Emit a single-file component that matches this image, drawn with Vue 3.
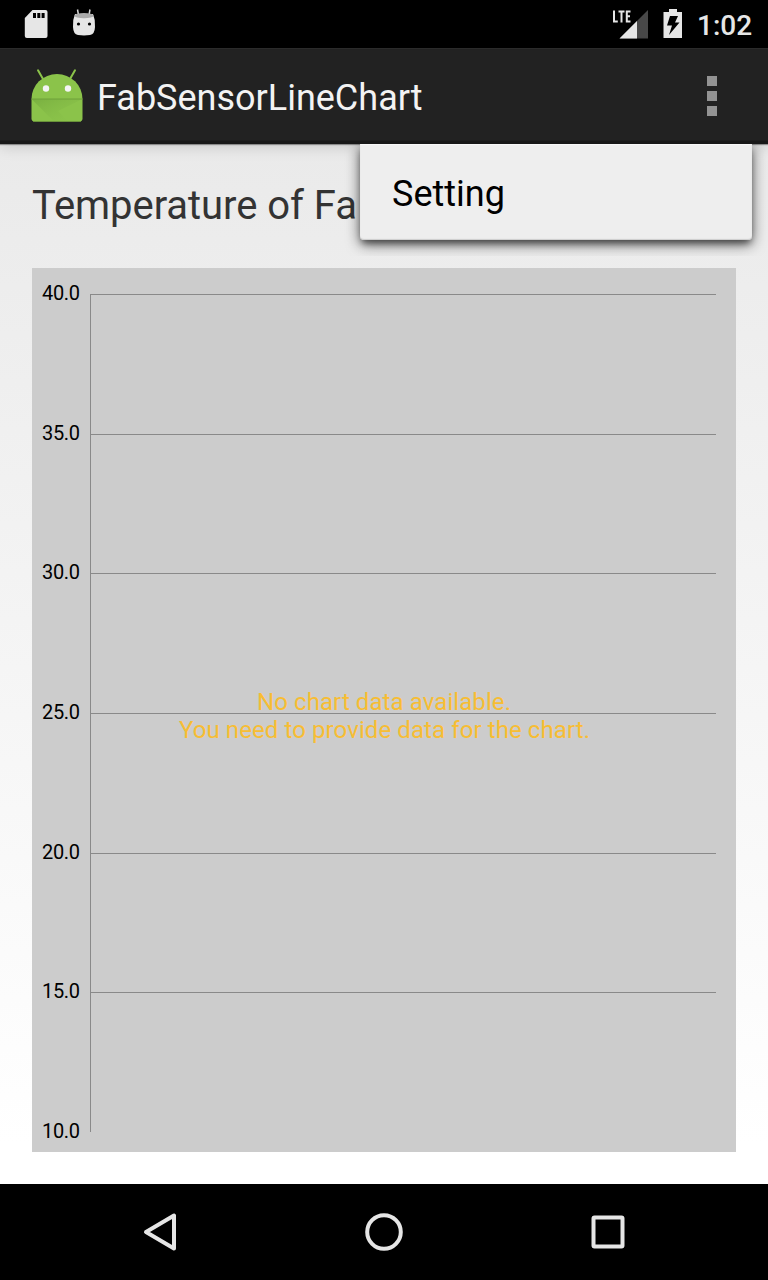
<script setup>
const ticks = [
  { label: '40.0', y: 26 },
  { label: '35.0', y: 166 },
  { label: '30.0', y: 305 },
  { label: '25.0', y: 445 },
  { label: '20.0', y: 585 },
  { label: '15.0', y: 724 },
  { label: '10.0', y: 864 },
]
</script>

<template>
  <div class="screen">
    <header class="status">
      <svg class="sd" width="24" height="30" viewBox="0 0 24 30">
        <path fill="#e6e6e6" d="M8.500 1H21.500a2 2 0 0 1 2 2v24a2 2 0 0 1-2 2H2.800a2 2 0 0 1-2-2V9z" />
        <path fill="#000" d="M9 4h3v5H9zM13.300 4h3v5h-3zM17.600 4h3v5h-3z" />
      </svg>
      <svg class="droid" width="24" height="30" viewBox="0 0 24 30">
        <path d="M5.500 1.500 6.500 7M18 1.500 17 7" stroke="#d8d8d8" stroke-width="1.500" fill="none" />
        <path fill="#e6e6e6" d="M3 6h18q2.600 6 2 13-.3 7.300-5 8-6 .8-12 0-4.700-.7-5-8Q.4 12 3 6z" />
        <ellipse cx="12" cy="7.700" rx="9.500" ry="2.600" fill="#aaa" />
        <circle cx="6.500" cy="16" r="1.600" fill="#000" />
        <circle cx="17.500" cy="16" r="1.600" fill="#000" />
      </svg>
      <span class="gap"></span>
      <svg class="signal" width="38" height="32" viewBox="0 0 38 32">
        <path fill="#484848" d="M37 2v28.500H8.500z" />
        <path fill="#e6e6e6" d="M26 13v17.500H8.500z" />
        <path d="M3 2.500v11H6.800M7.500 3.500H13.500M10.500 3.500V14.500M19.500 3.500H15.800V13.500H19.500M15.800 8.300H19" stroke="#e6e6e6" stroke-width="2" fill="none" />
      </svg>
      <svg class="battery" width="20" height="30" viewBox="0 0 20 30">
        <path fill="#e6e6e6" d="M6 0h8v3h5v26H.500V3H6z" />
        <path fill="#000" d="M7 7h8l-3 6.500h4.500L6 26 9 16.500H4z" />
      </svg>
      <span class="time">1:02</span>
    </header>

    <div class="bar">
      <svg class="logo" width="54" height="56" viewBox="0 0 54 56">
        <defs>
          <linearGradient id="fold" x1="0" y1="0" x2="1" y2="1">
            <stop offset="0" stop-color="#669b36" stop-opacity=".5" />
            <stop offset="1" stop-color="#8bc34a" stop-opacity="0" />
          </linearGradient>
        </defs>
        <path d="M8 2.300 13 11M45 2.300 40 11" stroke="#8bc34a" stroke-width="2" stroke-linecap="round" />
        <path fill="#8bc34a" d="M1.500 31a25.500 25 0 0 1 51 0v19.500a3 3 0 0 1-3 3h-45a3 3 0 0 1-3-3z" />
        <path fill="url(#fold)" d="M1.500 31H52.500L28 43 38 53.500H24z" />
        <path d="M1.500 31h51" stroke="#6fa03a" />
        <path d="M3 53.500h48" stroke="#6f9c3b" stroke-width=".8" />
        <circle cx="16" cy="20.500" r="3.200" fill="#f4f4f4" />
        <circle cx="38" cy="20.500" r="3.200" fill="#f4f4f4" />
      </svg>
      <span class="app-title">FabSensorLineChart</span>
      <div class="overflow"><i></i><i></i><i></i></div>
      <div class="menu-clip">
        <div class="menu"><span>Setting</span></div>
      </div>
    </div>

    <main>
      <h1>Temperature of Fa</h1>
      <svg class="chart" width="704" height="884" viewBox="0 0 704 884">
        <g v-for="(t, i) in ticks" :key="t.label">
          <text class="tick" x="10" :y="t.y + 6" textLength="38">{{ t.label }}</text>
          <rect v-if="i < 6" x="58" :y="Math.round(26 + i * 139.67)" width="626" height="1" fill="#898989" />
        </g>
        <rect x="58" y="26" width="1" height="838" fill="#898989" />
        <text class="empty" x="225" y="442" textLength="254">No chart data available.</text>
        <text class="empty" x="147" y="470" textLength="411">You need to provide data for the chart.</text>
      </svg>
    </main>

    <nav>
      <svg width="40" height="44" viewBox="0 0 40 44">
        <path d="M34 5.500v33L6 22z" />
      </svg>
      <svg width="40" height="44" viewBox="0 0 40 44">
        <circle cx="20" cy="22" r="16.800" />
      </svg>
      <svg width="40" height="44" viewBox="0 0 40 44">
        <rect x="5.500" y="7.500" width="29" height="29" rx="1" />
      </svg>
    </nav>
  </div>
</template>

<style>
body { margin: 0; background: #000; }
</style>

<style scoped>
.screen {
  width: 768px;
  height: 1280px;
  display: flex;
  flex-direction: column;
  overflow: hidden;
  background: #fff;
  font-family: Roboto, sans-serif;
}
.status {
  height: 48px;
  flex: none;
  display: flex;
  align-items: center;
  background: #000;
  padding: 0 16px 0 24px;
  box-sizing: border-box;
}
.droid { margin: -3px 0 0 24px; }
.gap { flex: 1; }
.battery { margin: 0 14px; }
.time {
  width: 55px;
  padding-top: 3px;
  font-size: 28px;
  line-height: 45px;
  font-weight: 500;
  color: #e6e6e6;
  white-space: nowrap;
}
.bar {
  position: relative;
  z-index: 1;
  height: 96px;
  flex: none;
  box-sizing: border-box;
  display: flex;
  align-items: center;
  padding: 0 51px 0 30px;
  background: linear-gradient(#2b2b2b 0 1px, #222 1px 92px, #181818 93px);
  box-shadow: 0 1px 1px rgba(0, 0, 0, .35), 0 3px 14px rgba(0, 0, 0, .14);
}
.logo { margin-bottom: 1px; }
.app-title {
  flex: 1;
  margin: 4px 0 0 13px;
  color: #f3f3f3;
  font-size: 36px;
  line-height: 44px;
}
.overflow { display: flex; flex-direction: column; gap: 5px; }
.overflow i { width: 10px; height: 10px; background: #939393; }
.menu-clip {
  position: absolute;
  top: 96px;
  right: 0;
  width: 424px;
  height: 112px;
  overflow: hidden;
}
.menu {
  margin-left: 16px;
  width: 392px;
  height: 96px;
  box-sizing: border-box;
  padding: 4px 32px 0;
  display: flex;
  align-items: center;
  background: #eee;
  border-radius: 0 0 4px 4px;
  box-shadow: 0 4px 14px rgba(0, 0, 0, .65), 0 5px 6px -2px rgba(0, 0, 0, .4), inset 0 -1px 1px #ccc, inset 0 1px 1px #f8f8f8;
  font-size: 36px;
  color: #000;
}
main {
  flex: 1;
  padding: 0 32px;
  background: linear-gradient(#eaeaea, #fff 96%);
}
h1 {
  margin: 0;
  height: 124px;
  line-height: 124px;
  font-size: 40px;
  font-weight: 400;
  letter-spacing: -0.05px;
  color: #333;
}
.chart { display: block; background: #ccc; }
.tick { font-size: 20px; fill: #000; }
.empty { font-size: 24px; fill: #f7bd33; }
nav {
  height: 96px;
  flex: none;
  box-sizing: border-box;
  background: #000;
  display: flex;
  align-items: center;
  justify-content: space-between;
  padding: 0 140px;
}
nav svg { fill: none; stroke: #e6e6e6; stroke-width: 4; stroke-linejoin: round; }
</style>
